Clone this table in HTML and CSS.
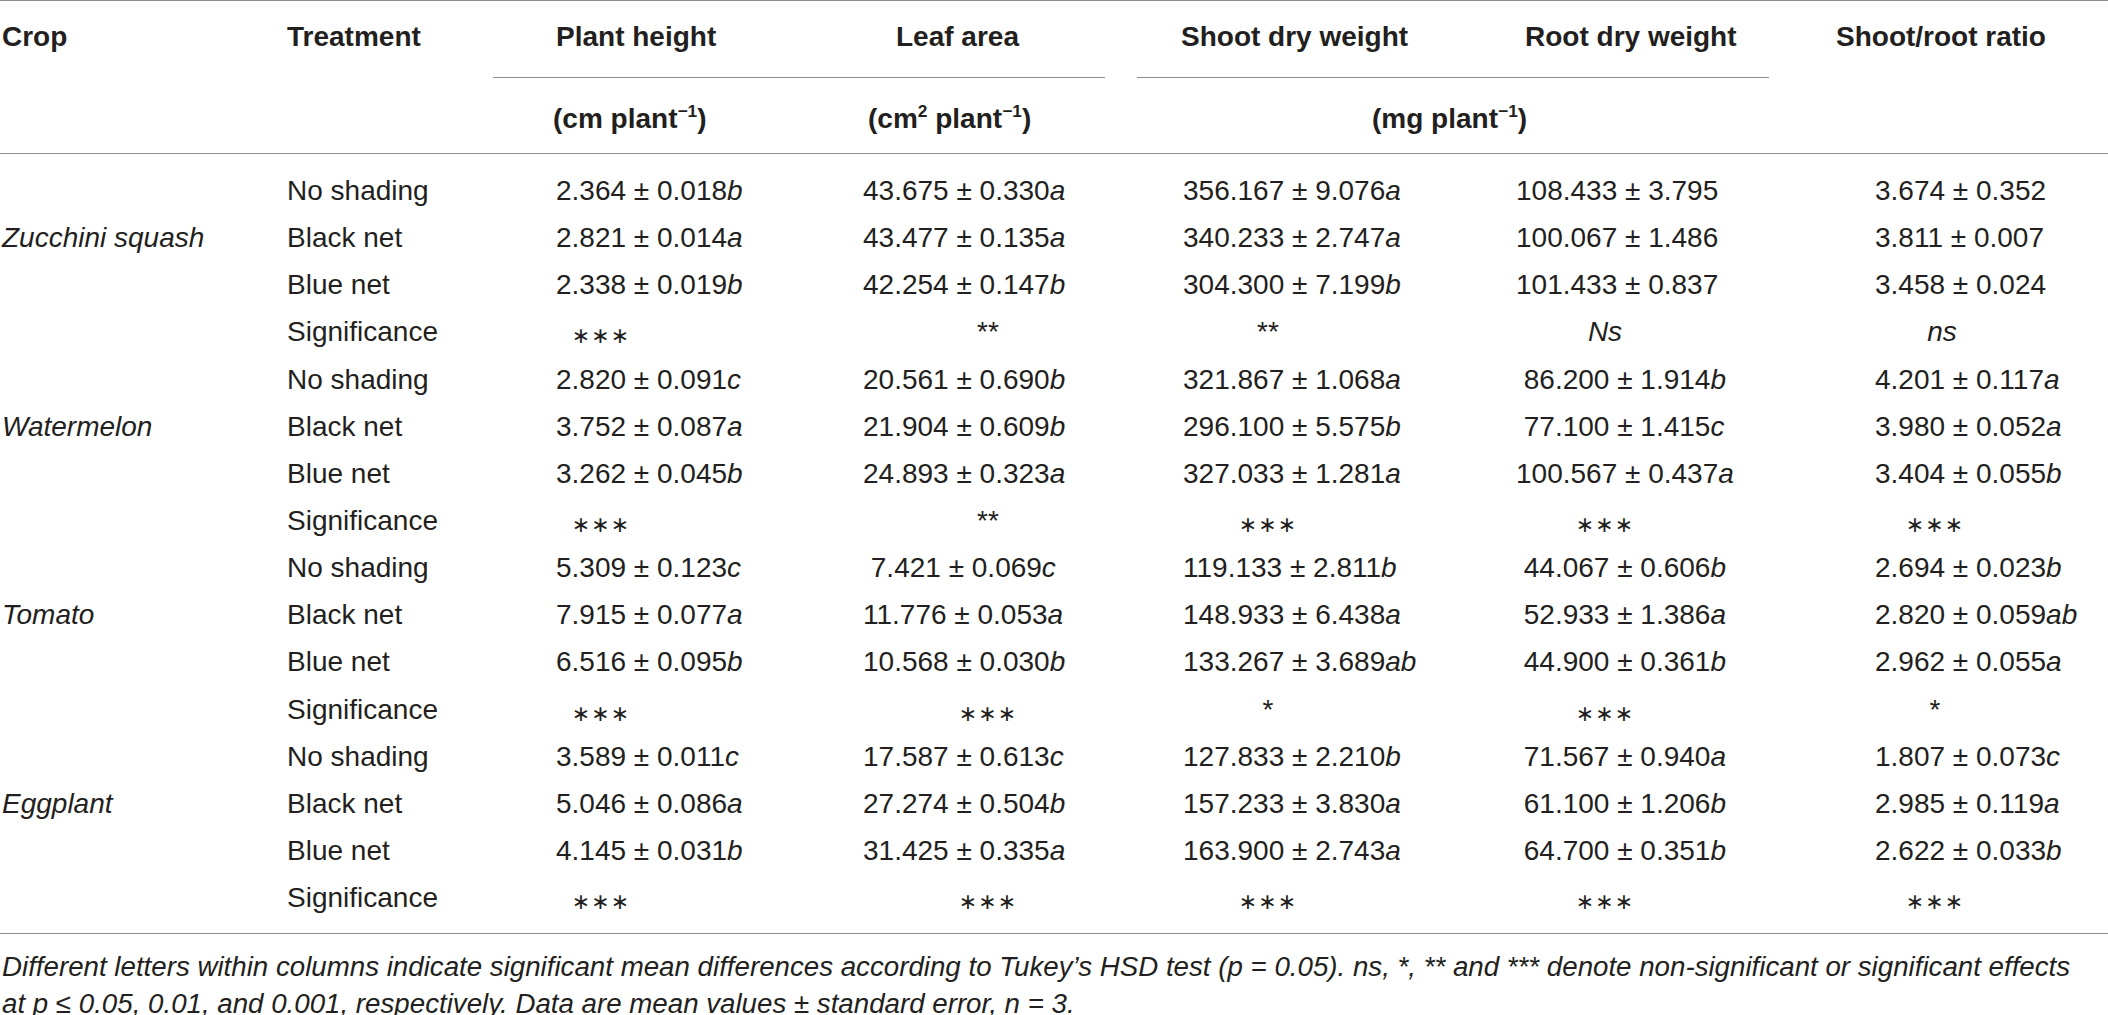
FILE: index.html
```html
<!DOCTYPE html>
<html lang="en">
<head>
    <meta charset="UTF-8">
    <meta name="viewport" content="width=device-width, initial-scale=1.0">
    <title>Shading nets and seedling growth</title>
    <link rel="stylesheet" href="styles.css">
</head>
<body>
    <div class="table">
        <div class="head">
            <div class="row names">
                <div>Crop</div>
                <div>Treatment</div>
                <div>Plant height</div>
                <div>Leaf area</div>
                <div>Shoot dry weight</div>
                <div>Root dry weight</div>
                <div>Shoot/root ratio</div>
            </div>
            <div class="row rules">
                <div class="rule rule-cm"></div>
                <div class="rule rule-mg"></div>
            </div>
            <div class="row units">
                <div class="unit-height">(cm plant<sup>&minus;1</sup>)</div>
                <div class="unit-area">(cm<sup>2</sup> plant<sup>&minus;1</sup>)</div>
                <div class="unit-mass">(mg plant<sup>&minus;1</sup>)</div>
            </div>
        </div>

        <div class="body">
            <!-- Zucchini squash -->
            <div class="row">
                <div></div>
                <div>No shading</div>
                <div>2.364 &plusmn; 0.018<i>b</i></div>
                <div>43.675 &plusmn; 0.330<i>a</i></div>
                <div>356.167 &plusmn; 9.076<i>a</i></div>
                <div>108.433 &plusmn; 3.795</div>
                <div>3.674 &plusmn; 0.352</div>
            </div>
            <div class="row">
                <div class="crop">Zucchini squash</div>
                <div>Black net</div>
                <div>2.821 &plusmn; 0.014<i>a</i></div>
                <div>43.477 &plusmn; 0.135<i>a</i></div>
                <div>340.233 &plusmn; 2.747<i>a</i></div>
                <div>100.067 &plusmn; 1.486</div>
                <div>3.811 &plusmn; 0.007</div>
            </div>
            <div class="row">
                <div></div>
                <div>Blue net</div>
                <div>2.338 &plusmn; 0.019<i>b</i></div>
                <div>42.254 &plusmn; 0.147<i>b</i></div>
                <div>304.300 &plusmn; 7.199<i>b</i></div>
                <div>101.433 &plusmn; 0.837</div>
                <div>3.458 &plusmn; 0.024</div>
            </div>
            <div class="row sig">
                <div></div>
                <div>Significance</div>
                <div><span class="stars">&lowast;&lowast;&lowast;</span></div>
                <div><span class="small-stars">**</span></div>
                <div><span class="small-stars">**</span></div>
                <div><i>Ns</i></div>
                <div><i class="ns">ns</i></div>
            </div>

            <!-- Watermelon -->
            <div class="row">
                <div></div>
                <div>No shading</div>
                <div>2.820 &plusmn; 0.091<i>c</i></div>
                <div>20.561 &plusmn; 0.690<i>b</i></div>
                <div>321.867 &plusmn; 1.068<i>a</i></div>
                <div>&nbsp;86.200 &plusmn; 1.914<i>b</i></div>
                <div>4.201 &plusmn; 0.117<i>a</i></div>
            </div>
            <div class="row">
                <div class="crop">Watermelon</div>
                <div>Black net</div>
                <div>3.752 &plusmn; 0.087<i>a</i></div>
                <div>21.904 &plusmn; 0.609<i>b</i></div>
                <div>296.100 &plusmn; 5.575<i>b</i></div>
                <div>&nbsp;77.100 &plusmn; 1.415<i>c</i></div>
                <div>3.980 &plusmn; 0.052<i>a</i></div>
            </div>
            <div class="row">
                <div></div>
                <div>Blue net</div>
                <div>3.262 &plusmn; 0.045<i>b</i></div>
                <div>24.893 &plusmn; 0.323<i>a</i></div>
                <div>327.033 &plusmn; 1.281<i>a</i></div>
                <div>100.567 &plusmn; 0.437<i>a</i></div>
                <div>3.404 &plusmn; 0.055<i>b</i></div>
            </div>
            <div class="row sig">
                <div></div>
                <div>Significance</div>
                <div><span class="stars">&lowast;&lowast;&lowast;</span></div>
                <div><span class="small-stars">**</span></div>
                <div><span class="stars">&lowast;&lowast;&lowast;</span></div>
                <div><span class="stars">&lowast;&lowast;&lowast;</span></div>
                <div><span class="stars">&lowast;&lowast;&lowast;</span></div>
            </div>

            <!-- Tomato -->
            <div class="row">
                <div></div>
                <div>No shading</div>
                <div>5.309 &plusmn; 0.123<i>c</i></div>
                <div>&nbsp;7.421 &plusmn; 0.069<i>c</i></div>
                <div>119.133 &plusmn; 2.811<i>b</i></div>
                <div>&nbsp;44.067 &plusmn; 0.606<i>b</i></div>
                <div>2.694 &plusmn; 0.023<i>b</i></div>
            </div>
            <div class="row">
                <div class="crop">Tomato</div>
                <div>Black net</div>
                <div>7.915 &plusmn; 0.077<i>a</i></div>
                <div>11.776 &plusmn; 0.053<i>a</i></div>
                <div>148.933 &plusmn; 6.438<i>a</i></div>
                <div>&nbsp;52.933 &plusmn; 1.386<i>a</i></div>
                <div>2.820 &plusmn; 0.059<i>ab</i></div>
            </div>
            <div class="row">
                <div></div>
                <div>Blue net</div>
                <div>6.516 &plusmn; 0.095<i>b</i></div>
                <div>10.568 &plusmn; 0.030<i>b</i></div>
                <div>133.267 &plusmn; 3.689<i>ab</i></div>
                <div>&nbsp;44.900 &plusmn; 0.361<i>b</i></div>
                <div>2.962 &plusmn; 0.055<i>a</i></div>
            </div>
            <div class="row sig">
                <div></div>
                <div>Significance</div>
                <div><span class="stars">&lowast;&lowast;&lowast;</span></div>
                <div><span class="stars">&lowast;&lowast;&lowast;</span></div>
                <div><span class="small-stars">*</span></div>
                <div><span class="stars">&lowast;&lowast;&lowast;</span></div>
                <div><span class="small-stars">*</span></div>
            </div>

            <!-- Eggplant -->
            <div class="row">
                <div></div>
                <div>No shading</div>
                <div>3.589 &plusmn; 0.011<i>c</i></div>
                <div>17.587 &plusmn; 0.613<i>c</i></div>
                <div>127.833 &plusmn; 2.210<i>b</i></div>
                <div>&nbsp;71.567 &plusmn; 0.940<i>a</i></div>
                <div>1.807 &plusmn; 0.073<i>c</i></div>
            </div>
            <div class="row">
                <div class="crop">Eggplant</div>
                <div>Black net</div>
                <div>5.046 &plusmn; 0.086<i>a</i></div>
                <div>27.274 &plusmn; 0.504<i>b</i></div>
                <div>157.233 &plusmn; 3.830<i>a</i></div>
                <div>&nbsp;61.100 &plusmn; 1.206<i>b</i></div>
                <div>2.985 &plusmn; 0.119<i>a</i></div>
            </div>
            <div class="row">
                <div></div>
                <div>Blue net</div>
                <div>4.145 &plusmn; 0.031<i>b</i></div>
                <div>31.425 &plusmn; 0.335<i>a</i></div>
                <div>163.900 &plusmn; 2.743<i>a</i></div>
                <div>&nbsp;64.700 &plusmn; 0.351<i>b</i></div>
                <div>2.622 &plusmn; 0.033<i>b</i></div>
            </div>
            <div class="row sig">
                <div></div>
                <div>Significance</div>
                <div><span class="stars">&lowast;&lowast;&lowast;</span></div>
                <div><span class="stars">&lowast;&lowast;&lowast;</span></div>
                <div><span class="stars">&lowast;&lowast;&lowast;</span></div>
                <div><span class="stars">&lowast;&lowast;&lowast;</span></div>
                <div><span class="stars">&lowast;&lowast;&lowast;</span></div>
            </div>
        </div>
    </div>

    <p class="note">Different letters within columns indicate significant mean differences according to Tukey&rsquo;s HSD test (p = 0.05). ns, *, ** and *** denote non-significant or significant effects at p &le; 0.05, 0.01, and 0.001, respectively. Data are mean values &plusmn; standard error, n = 3.</p>
</body>
</html>
```

FILE: styles.css
```css
body {
    margin: 0;
    background: #fff;
    color: #231f20;
    font-family: "Liberation Sans", Arial, Helvetica, sans-serif;
    font-size: 28px;
}
.table {
    width: 2108px;
    border-top: 1px solid #8c8c8c;
    border-bottom: 1px solid #8c8c8c;
}
.row {
    display: grid;
    grid-template-columns: 287px 206px 306px 338px 316px 316px 339px;
    white-space: nowrap;
}
i {
    font-style: italic;
}

/* header */
.head {
    border-bottom: 1px solid #8c8c8c;
    font-weight: bold;
}
.names {
    height: 76px;
    line-height: 32px;
    padding-top: 19.5px;
    box-sizing: border-box;
}
.names > :nth-child(1) { padding-left: 2px; }
.names > :nth-child(3) { padding-left: 63px; }
.names > :nth-child(4) { padding-left: 97px; }
.names > :nth-child(5) { padding-left: 44px; }
.names > :nth-child(6) { padding-left: 72px; }
.names > :nth-child(7) { padding-left: 67px; }
.rules {
    height: 1px;
}
.rule {
    border-top: 1px solid #8c8c8c;
}
.rule-cm {
    grid-column: 3 / 5;
    margin-right: 32px;
}
.rule-mg {
    grid-column: 5 / 7;
}
.units {
    height: 75px;
    line-height: 32px;
    padding-top: 24.5px;
    box-sizing: border-box;
}
.unit-height {
    grid-column: 3;
    padding-left: 60px;
}
.unit-area {
    grid-column: 4;
    padding-left: 69px;
}
.unit-mass {
    grid-column: 5 / 7;
    padding-left: 235px;
}
sup {
    font-size: 0.62em;
    line-height: 0;
    vertical-align: 0.62em;
}

/* body */
.body {
    padding: 13px 0 12px;
}
.body .row {
    height: 47.15px;
    line-height: 47.15px;
}
.crop {
    padding-left: 2px;
    font-style: italic;
}
.body .row > :nth-child(3) { padding-left: 63px; }
.body .row > :nth-child(4) { padding-left: 64px; }
.body .row > :nth-child(5) { padding-left: 46px; }
.body .row > :nth-child(6) { padding-left: 63px; }
.body .row > :nth-child(7) { padding-left: 106px; }

/* significance stars are centred on their own axis in each column */
.body .sig > :nth-child(n+3) {
    text-align: center;
    padding-left: 0;
}
.body .sig > :nth-child(3) { padding-right: 90px; }
.body .sig > :nth-child(4) { padding-left: 40px; }
.body .sig > :nth-child(5) { padding-right: 54px; }
.body .sig > :nth-child(6) { padding-right: 12px; }
.body .sig > :nth-child(7) { padding-right: 7px; }
.stars {
    position: relative;
    top: 2px;
    font-family: "DejaVu Sans", sans-serif;
    font-size: 22px;
    letter-spacing: 1px;
}
.small-stars {
    font-size: 28px;
}
.ns {
    margin-left: 14px;
}

.note {
    max-width: 2090px;
    margin: 0;
    padding: 14px 0 0 2px;
    font-size: 27.7px;
    line-height: 37px;
    font-style: italic;
}
```
